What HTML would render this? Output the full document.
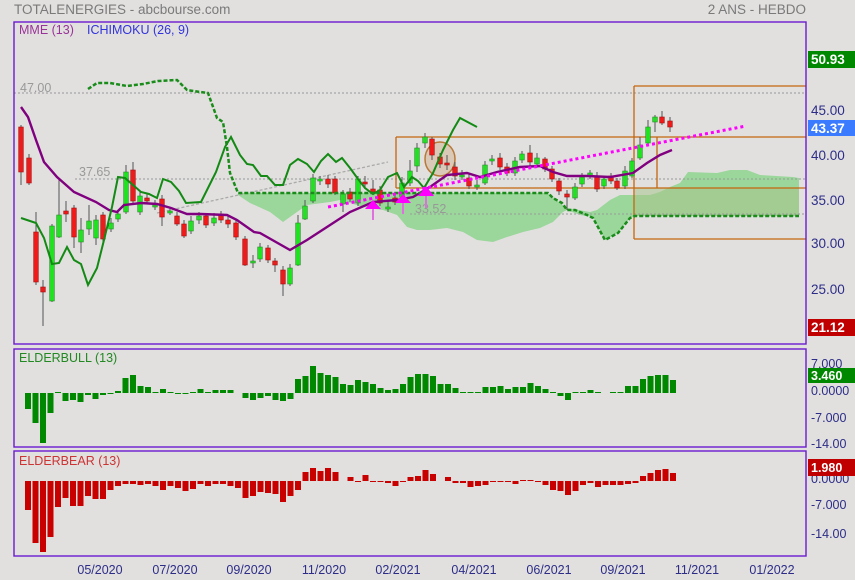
<!DOCTYPE html>
<html><head><meta charset="utf-8"><style>
html,body{margin:0;padding:0;background:#e1e0df;}
svg{display:block;font-family:"Liberation Sans",sans-serif;}
</style></head><body>
<svg id="s" width="855" height="580" viewBox="0 0 855 580" xmlns="http://www.w3.org/2000/svg">
<rect width="855" height="580" fill="#e1e0df"/>
<text x="14" y="14" font-size="13.5" fill="#7a7a7a">TOTALENERGIES - abcbourse.com</text>
<text x="806" y="14" font-size="13.5" fill="#7a7a7a" text-anchor="end">2 ANS - HEBDO</text>

<!-- cloud -->
<polygon fill="#94d594" opacity="0.9" points="238,193 548,193 560,203 567,208 590,212 597,210 610,200 620,195 650,195 660,192 670,187 680,183 688,172 717,173 730,170 747,170 760,175 793,177 799,178 799,216 635,216 630,218 618,233 605,240 593,217 580,215 567,210 563,212 553,222 540,228 523,232 507,237 493,242 477,240 463,232 447,228 430,230 417,230 407,227 397,215 383,210 363,207 340,200 330,202 307,205 297,212 283,222 270,212 250,203 238,195"/>
<rect x="635" y="188" width="164" height="28" fill="#a8c48a" opacity="0.55"/>

<!-- dotted horizontal lines -->
<line x1="14" y1="93" x2="806" y2="93" stroke="#999" stroke-dasharray="2,2"/>
<line x1="75" y1="179" x2="806" y2="179" stroke="#999" stroke-dasharray="2,2"/>
<line x1="410" y1="214" x2="806" y2="214" stroke="#999" stroke-dasharray="2,2"/>
<text x="20" y="92" font-size="12.5" fill="#999">47.00</text>
<text x="79" y="176" font-size="12.5" fill="#999">37.65</text>
<text x="415" y="213" font-size="12.5" fill="#999">33.52</text>
<line x1="157" y1="213" x2="388" y2="162" stroke="#aaa" stroke-width="1.3" stroke-dasharray="3,2"/>

<!-- orange boxes -->
<g stroke="#c4660c" stroke-width="1.3" fill="none">
<line x1="396" y1="137" x2="806" y2="137"/><line x1="396" y1="188" x2="806" y2="188"/>
<line x1="396" y1="137" x2="396" y2="188"/><line x1="657" y1="137" x2="657" y2="188"/>
<line x1="634" y1="86" x2="806" y2="86"/><line x1="634" y1="239" x2="806" y2="239"/>
<line x1="634" y1="86" x2="634" y2="239"/>
</g>
<ellipse cx="440" cy="159" rx="15" ry="17" fill="rgba(200,150,90,0.3)" stroke="#b87838" stroke-width="1.5"/>

<g id="candles"></g>

<!-- lines -->
<polyline fill="none" stroke="#800080" stroke-width="2.4" points="21,107 28,117 36,140 44,162 57,177 74,192 96,202 109,210 117,212 124,205 141,203 157,204 171,208 187,214 201,214 227,215 237,220 254,232 260,233 290,250 307,240 327,227 350,212 373,202 397,200 413,197 430,187 447,175 467,173 480,177 497,172 520,167 540,166 553,172 567,176 587,176 610,177 633,173 647,163 660,155 672,150"/>
<polyline fill="none" stroke="#138a13" stroke-width="2" points="21,218 36,223 44,238 52,264 59,263 67,247 74,260 81,264 88,285 97,268 104,240 112,207 118,177 125,178 141,192 149,194 157,198 163,179 171,182 179,191 186,203 201,202 207,190 216,172 225,147 231,137 240,155 247,164 253,165 261,176 267,176 275,185 283,185 290,165 298,159 307,164 314,172 321,161 328,154 336,162 342,158 350,168 358,179 365,188 373,194 380,190 388,177 397,173 404,187 412,177 418,181 424,188 433,173 443,150 453,130 460,118 477,127"/>
<polyline fill="none" stroke="#1a8c1a" stroke-width="2.5" stroke-dasharray="4,2" points="88,89 97,83 110,83 127,86 143,84 158,81 177,80 187,90 200,92 208,93 217,118 223,122 227,147 230,173 238,193 548,193 553,198 562,203 567,210 575,210 587,215 593,218 605,240 618,233 630,218 635,216 799,216"/>
<line x1="328" y1="207" x2="746" y2="126" stroke="#ff00ff" stroke-width="3" stroke-dasharray="3,3"/>

<!-- arrows -->
<g fill="#ff00ff">
<rect x="372" y="208" width="2" height="12" fill="#e070e0"/><polygon points="373,200 365,209 381,209"/>
<rect x="402" y="202" width="2" height="12" fill="#e070e0"/><polygon points="403,194 395,203 411,203"/>
<rect x="425" y="196" width="2" height="12" fill="#e070e0"/><polygon points="426,186 418,196 434,196"/>
</g>

<g id="bars"></g>

<!-- panels -->
<g fill="none" stroke="#6a1ad0" stroke-width="1.4">
<rect x="14" y="22" width="792" height="322"/>
<rect x="14" y="349" width="792" height="98"/>
<rect x="14" y="451" width="792" height="105"/>
</g>
<text x="19" y="34" font-size="12.5" fill="#993399">MME (13)</text>
<text x="87" y="34" font-size="12.5" fill="#3333dd">ICHIMOKU (26, 9)</text>
<text x="19" y="362" font-size="12.5" fill="#228822">ELDERBULL (13)</text>
<text x="19" y="465" font-size="12.5" fill="#cc3333">ELDERBEAR (13)</text>

<g font-size="13.5" fill="#2d2d88">
<text x="811" y="115">45.00</text><text x="811" y="160">40.00</text><text x="811" y="205">35.00</text>
<text x="811" y="248">30.00</text><text x="811" y="294">25.00</text>
</g>
<rect x="808" y="51" width="47" height="17" fill="#008800"/><text x="811" y="64" font-size="13.5" fill="#fff" font-weight="bold">50.93</text>
<rect x="808" y="120" width="47" height="16" fill="#3b7bff"/><text x="811" y="133" font-size="13.5" fill="#fff" font-weight="bold">43.37</text>
<rect x="808" y="319" width="47" height="17" fill="#c00000"/><text x="811" y="332" font-size="13.5" fill="#fff" font-weight="bold">21.12</text>

<g font-size="12.5" fill="#2d2d88">
<text x="811" y="368">7.000</text><text x="811" y="395">0.0000</text><text x="811" y="422">-7.000</text><text x="811" y="448">-14.00</text>
<text x="811" y="483">0.0000</text><text x="811" y="509">-7.000</text><text x="811" y="538">-14.00</text>
</g>
<rect x="808" y="368" width="47" height="15" fill="#008800"/><text x="811" y="380" font-size="12.5" fill="#fff" font-weight="bold">3.460</text>
<rect x="808" y="459" width="47" height="17" fill="#c00000"/><text x="811" y="472" font-size="12.5" fill="#fff" font-weight="bold">1.980</text>

<g font-size="12.5" fill="#2d2d88" text-anchor="middle">
<text x="100" y="574">05/2020</text><text x="175" y="574">07/2020</text><text x="249" y="574">09/2020</text>
<text x="324" y="574">11/2020</text><text x="398" y="574">02/2021</text><text x="474" y="574">04/2021</text>
<text x="549" y="574">06/2021</text><text x="623" y="574">09/2021</text><text x="697" y="574">11/2021</text>
<text x="772" y="574">01/2022</text>
</g>
</svg>
<script>
var NS="http://www.w3.org/2000/svg";
function el(p,t,a){var e=document.createElementNS(NS,t);for(var k in a)e.setAttribute(k,a[k]);p.appendChild(e);return e;}
var C=[[21,127,172,'r',125,185],[29,158,183,'r',154,185],[36,232,282,'r',212,285],[43,287,292,'r',280,326],[52,226,301,'g',224,302],[59,215,237,'g',180,238],[66,211,214,'r',201,222],[74,208,237,'r',205,248],[81,230,242,'g',218,253],[89,221,229,'g',205,235],[96,220,238,'g',215,245],[103,215,239,'r',212,242],[111,223,229,'g',218,232],[118,214,219,'g',210,222],[126,172,212,'g',165,214],[133,170,201,'r',162,205],[140,196,212,'g',192,215],[147,198,201,'r',194,204],[155,205,207,'g',200,210],[162,199,217,'r',195,226],[170,211,213,'g',207,215],[177,216,224,'r',212,226],[184,224,236,'r',220,238],[191,221,231,'g',216,234],[199,216,220,'g',212,224],[206,216,225,'r',213,228],[214,218,223,'g',213,226],[221,214,220,'r',211,223],[228,220,224,'r',216,228],[236,223,237,'r',220,240],[245,239,265,'r',236,266],[253,261,263,'g',255,268],[260,247,259,'g',243,262],[268,248,260,'r',245,263],[275,261,265,'r',258,272],[283,270,284,'r',266,296],[290,268,284,'g',264,286],[298,223,265,'g',215,266],[305,206,219,'g',200,220],[313,178,201,'g',174,203],[320,179,181,'g',176,185],[328,179,184,'r',175,188],[335,179,193,'r',176,195],[343,194,204,'g',190,212],[350,192,199,'r',188,202],[358,179,203,'g',176,206],[365,182,184,'r',176,188],[373,189,192,'r',180,195],[380,190,203,'r',186,206],[388,207,209,'g',200,212],[395,198,202,'r',192,205],[402,183,197,'g',177,200],[410,171,183,'g',160,186],[417,148,166,'g',143,172],[425,137,143,'g',133,148],[432,139,155,'r',137,160],[440,157,164,'r',153,168],[447,163,165,'r',155,170],[455,167,176,'r',162,180],[462,175,177,'g',170,180],[469,178,186,'r',173,189],[477,185,187,'g',180,190],[485,165,183,'g',161,185],[492,159,161,'g',155,165],[500,158,167,'r',153,170],[507,167,173,'r',163,176],[515,161,173,'g',157,176],[522,154,160,'g',151,163],[530,153,162,'r',145,166],[537,158,164,'g',153,168],[545,159,169,'r',157,172],[552,169,179,'r',166,182],[559,181,191,'r',178,195],[567,194,197,'r',190,210],[575,187,198,'g',183,200],[582,177,184,'g',173,187],[590,173,176,'g',170,179],[597,176,189,'r',172,192],[604,179,186,'g',176,189],[611,176,181,'r',173,184],[617,181,188,'r',178,190],[625,171,186,'g',166,189],[632,161,176,'g',158,178],[640,145,158,'g',137,160],[648,127,143,'g',120,145],[655,117,122,'g',115,132],[662,117,123,'r',111,125],[670,121,127,'r',117,132]];
var g=document.getElementById('candles');
C.forEach(function(c){
 el(g,'line',{x1:c[0],x2:c[0],y1:c[4],y2:c[5],stroke:'#555','stroke-width':1});
 var h=Math.max(2,c[2]-c[1]);
 el(g,'rect',{x:c[0]-2.3,y:c[1],width:4.6,height:h,fill:c[3]=='g'?'#22e022':'#ee1b1b',stroke:c[3]=='g'?'#2a8a2a':'#a01010','stroke-width':0.6});
});
var B=[-16,-30,-50,-20,1,-8,-7,-9,-2,-6,-2,-1,2,15,18,7,6,1,4,1,-1,-1,1,4,1,3,3,3,0,-5,-7,-5,-3,-7,-8,-6,14,17,27,20,18,16,9,8,13,11,9,5,3,4,9,16,19,19,17,9,9,5,1,1,1,6,6,7,4,6,6,10,7,4,1,-3,-7,1,1,3,1,0,1,1,7,7,14,17,18,18,13];
var R=[-29,-62,-71,-56,-26,-17,-25,-25,-15,-18,-18,-9,-5,-3,-3,-4,-3,-5,-9,-5,-7,-10,-8,-3,-5,-3,-3,-5,-7,-17,-15,-11,-12,-13,-21,-15,-9,9,13,10,13,9,0,4,-1,6,-1,-1,-2,-5,-1,4,5,11,7,0,4,-2,-2,-6,-5,-4,-1,-1,-1,-3,1,1,-1,-4,-9,-10,-14,-10,-4,-2,-6,-4,-4,-4,-3,-2,5,8,11,12,8];
var gb=document.getElementById('bars');
function bars(arr,z,col){arr.forEach(function(v,i){ if(v===0&&col=='#008800'&&i==28)return; if(v===0)return;
 var x=25+7.5*i,h=Math.max(1,Math.abs(v));el(gb,'rect',{x:x,y:v>0?z-h:z,width:6,height:h,fill:col});});}
bars(B,393,'#008800');bars(R,481,'#c80000');
</script>
</body></html>
